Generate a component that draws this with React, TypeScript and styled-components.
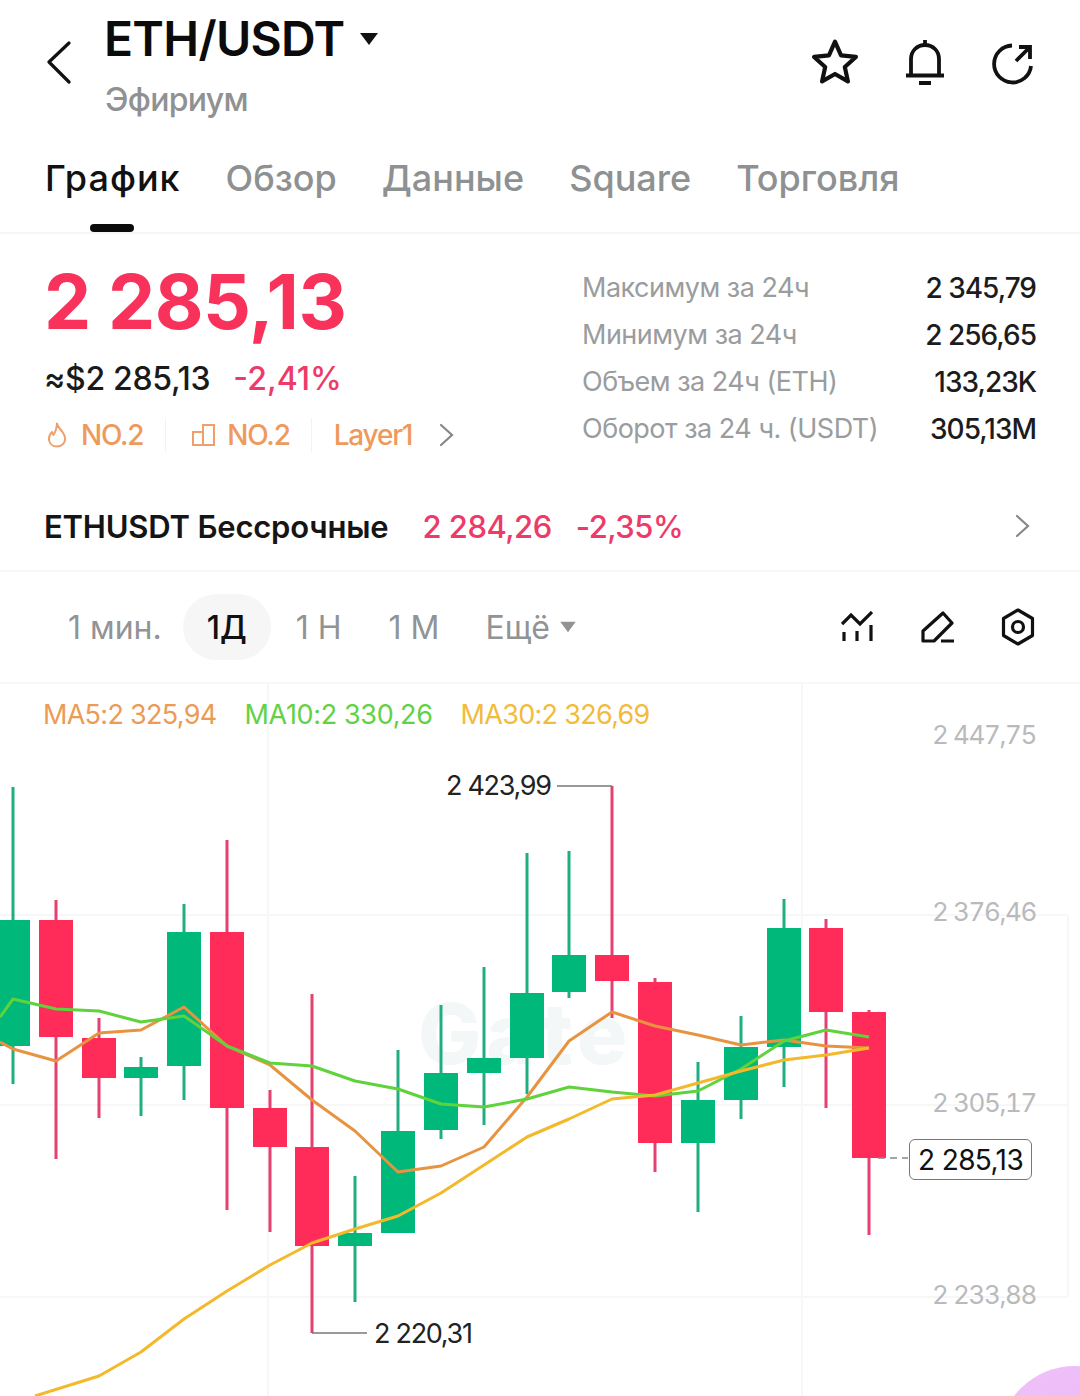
import React from "react";
import styled, { createGlobalStyle } from "styled-components";

const Global = createGlobalStyle`
  html, body { margin: 0; padding: 0; background: #fff; }
  body { font-family: Inter, "Noto Sans", sans-serif; }
`;

const Page = styled.div`
  width: 1080px;
  height: 1396px;
  position: relative;
  overflow: hidden;
  background: #fff;
  display: flex;
  flex-direction: column;
  font-family: Inter, "Noto Sans", sans-serif;
  color: #111;
`;

const Header = styled.header`
  height: 140px;
  display: flex;
  align-items: flex-start;
  padding: 14px 46px 0 46px;
  box-sizing: border-box;
`;
const BackIcon = styled.svg`
  width: 26px;
  height: 44px;
  margin: 26px 32px 0 0;
  flex: none;
`;
const TitleBlock = styled.div`
  display: flex;
  flex-direction: column;
  flex: 1;
`;
const TitleRow = styled.div`
  display: flex;
  align-items: center;
  gap: 14px;
  height: 50px;
`;
const Title = styled.h1`
  margin: 0;
  font-size: 48px;
  line-height: 50px;
  font-weight: 600;
  letter-spacing: -0.7px;
  color: #0b0b0b;
`;
const Caret = styled.svg<{ $small?: boolean }>`
  width: ${(p) => (p.$small ? 18 : 20)}px;
  height: ${(p) => (p.$small ? 12 : 14)}px;
  flex: none;
`;
const Subtitle = styled.div`
  margin-top: 16px;
  padding-left: 1px;
  font-size: 32px;
  line-height: 40px;
  font-weight: 500;
  letter-spacing: -0.7px;
  color: #8f9192;
`;
const HeaderActions = styled.div`
  display: flex;
  align-items: center;
  gap: 47px;
  margin-top: 25px;
`;
const IconSvg = styled.svg`
  display: block;
  flex: none;
`;
const StarIcon = styled(IconSvg)`
  margin-top: -3px;
`;
const BellIcon = styled(IconSvg)`
  margin-left: -1px;
`;
const ShareIcon = styled(IconSvg)`
  margin-top: 3px;
`;
const PencilIcon = styled(IconSvg)`
  margin-left: 2px;
`;

const Tabs = styled.nav`
  height: 94px;
  display: flex;
  gap: 45px;
  padding: 0 0 0 45px;
  border-bottom: 2px solid #f6f6f6;
  box-sizing: border-box;
`;
const Tab = styled.div<{ $active?: boolean }>`
  position: relative;
  height: 92px;
  padding-top: 16px;
  box-sizing: border-box;
  font-size: 36px;
  line-height: 44px;
  font-weight: 500;
  letter-spacing: ${(p) => (p.$active ? "1px" : "0")};
  color: ${(p) => (p.$active ? "#111" : "#8e9192")};
  &::after {
    content: "";
    display: ${(p) => (p.$active ? "block" : "none")};
    position: absolute;
    left: 45px;
    bottom: 0;
    width: 44px;
    height: 8px;
    border-radius: 4px;
    background: #0b0b0b;
  }
`;

const Stats = styled.section`
  height: 234px;
  display: flex;
  justify-content: space-between;
  padding: 0 44px 0 44px;
  box-sizing: border-box;
`;
const StatsLeft = styled.div`
  display: flex;
  flex-direction: column;
`;
const BigPrice = styled.div`
  margin-top: 28px;
  font-size: 75px;
  line-height: 80px;
  font-weight: 700;
  letter-spacing: -0.5px;
  color: #f8325b;
`;
const SubPriceRow = styled.div`
  margin-top: 17px;
  display: flex;
  gap: 23px;
  font-size: 32px;
  line-height: 40px;
  letter-spacing: -0.3px;
`;
const Fiat = styled.span`
  color: #1a1a1a;
  font-weight: 500;
`;
const Change = styled.span`
  color: #ee3a68;
  font-weight: 500;
  letter-spacing: 0;
`;
const TagRow = styled.div`
  margin-top: 18px;
  display: flex;
  align-items: center;
  height: 36px;
`;
const Tag = styled.div<{ $left: number; $right: number; $gap?: number; $last?: boolean }>`
  display: flex;
  align-items: center;
  gap: ${(p) => p.$gap ?? 14}px;
  height: 34px;
  padding: 0 ${(p) => p.$right}px 0 ${(p) => p.$left}px;
  border-right: ${(p) => (p.$last ? "none" : "1px solid #f5f3f1")};
  font-size: 28px;
  font-weight: 500;
  letter-spacing: -1.2px;
  color: #ee9a5c;
`;
const TagChevron = styled.svg`
  width: 15px;
  height: 24px;
  margin-left: 27px;
`;
const StatsTable = styled.dl`
  margin: 30px 0 0;
  display: grid;
  grid-template-columns: 1fr auto;
  grid-auto-rows: 47px;
  width: 454px;
  align-items: center;
`;
const StatLabel = styled.dt`
  font-size: 27px;
  color: #9a9c9e;
  letter-spacing: -0.5px;
  white-space: nowrap;
`;
const StatValue = styled.dd`
  margin: 0;
  text-align: right;
  font-size: 28px;
  font-weight: 500;
  color: #1c1c1c;
  letter-spacing: -1px;
`;

const PerpRow = styled.div`
  height: 104px;
  display: flex;
  align-items: center;
  padding: 14px 50px 0 44px;
  box-sizing: border-box;
  border-bottom: 2px solid #f7f7f7;
  font-size: 31px;
`;
const PerpName = styled.span`
  font-weight: 600;
  color: #151515;
  letter-spacing: -0.2px;
  margin-right: 34px;
`;
const PerpPrice = styled.span`
  font-weight: 500;
  color: #ee3a68;
  letter-spacing: -0.5px;
  margin-right: 24px;
`;
const Grow = styled.div`
  flex: 1;
`;

const Timeframes = styled.div`
  height: 112px;
  display: flex;
  align-items: center;
  padding: 0 45px 0 68px;
  box-sizing: border-box;
  border-bottom: 2px solid #f7f7f7;
  font-size: 32px;
  color: #919395;
`;
const Frame = styled.div<{ $active?: boolean; $gap: number }>`
  height: 66px;
  display: flex;
  align-items: center;
  justify-content: center;
  box-sizing: border-box;
  border-radius: 33px;
  width: ${(p) => (p.$active ? "88px" : "auto")};
  background: ${(p) => (p.$active ? "#f6f6f6" : "transparent")};
  color: ${(p) => (p.$active ? "#111" : "#919395")};
  font-weight: ${(p) => (p.$active ? 500 : 400)};
  margin-right: ${(p) => p.$gap}px;
`;
const MoreFrame = styled.div`
  display: flex;
  align-items: center;
  gap: 9px;
  margin-left: 2px;
`;
const ToolGroup = styled.div`
  margin-left: auto;
  display: flex;
  align-items: center;
  gap: 46px;
`;

const Chart = styled.div`
  position: relative;
  flex: 1;
`;
const Legend = styled.div`
  position: relative;
  z-index: 2;
  display: flex;
  gap: 28px;
  padding: 13px 0 0 43px;
  font-size: 27px;
  line-height: 36px;
`;
const LegendItem = styled.span<{ $color: string; $spacing: number }>`
  color: ${(p) => p.$color};
  letter-spacing: ${(p) => p.$spacing}px;
`;
const ChartSvg = styled.svg`
  position: absolute;
  inset: 0;
  width: 1080px;
  height: 712px;
`;
const AxisLabel = styled.span<{ $y: number }>`
  position: absolute;
  right: 44px;
  top: ${(p) => p.$y - 684 - 18}px;
  font-size: 26px;
  line-height: 36px;
  letter-spacing: -1.4px;
  font-variant-numeric: tabular-nums;
  color: #b9babc;
`;
const Extreme = styled.span<{ $x: number; $y: number }>`
  position: absolute;
  left: ${(p) => p.$x}px;
  top: ${(p) => p.$y - 684 - 18}px;
  font-size: 27px;
  line-height: 36px;
  letter-spacing: -1.3px;
  color: #222;
`;
const PriceTag = styled.div`
  position: absolute;
  left: 909px;
  top: 455px;
  width: 123px;
  height: 41px;
  box-sizing: border-box;
  border: 1px solid #777;
  border-radius: 6px;
  background: #fff;
  display: flex;
  align-items: center;
  justify-content: center;
  font-size: 28px;
  letter-spacing: -0.6px;
  color: #111;
`;
const Blob = styled.div`
  position: absolute;
  left: 998px;
  top: 682px;
  width: 154px;
  height: 154px;
  border-radius: 50%;
  background: linear-gradient(135deg, #efc1f7, #e9b6fb);
`;

const GREEN = "#00b87a";
const RED = "#ff2b59";
const GW = "#20ad82";
const RW = "#e5406f";

type C = [number, "g" | "r", number, number, number, number];
const candles: C[] = [
  [13, "g", 787, 920, 1046, 1084],
  [56, "r", 900, 920, 1037, 1159],
  [99, "r", 1018, 1038, 1078, 1118],
  [141, "g", 1057, 1067, 1078, 1116],
  [184, "g", 904, 932, 1066, 1100],
  [227, "r", 840, 932, 1108, 1210],
  [270, "r", 1090, 1108, 1147, 1232],
  [312, "r", 994, 1147, 1246, 1333],
  [355, "g", 1176, 1233, 1246, 1302],
  [398, "g", 1050, 1131, 1233, 1233],
  [441, "g", 1005, 1073, 1130, 1139],
  [484, "g", 967, 1058, 1073, 1125],
  [527, "g", 853, 993, 1058, 1094],
  [569, "g", 851, 955, 992, 998],
  [612, "r", 786, 955, 981, 1018],
  [655, "r", 978, 982, 1143, 1172],
  [698, "g", 1062, 1100, 1143, 1212],
  [741, "g", 1016, 1047, 1100, 1119],
  [784, "g", 899, 928, 1047, 1087],
  [826, "r", 919, 928, 1012, 1108],
  [869, "r", 1010, 1012, 1158, 1235],
];

const ma5 =
  "0,1042 13,1049 56,1061 99,1033 141,1030 184,1007 227,1046 270,1065 312,1100 355,1131 398,1172 441,1166 484,1147 527,1097 569,1041 612,1012 655,1026 698,1035 741,1045 784,1040 826,1046 869,1048";
const ma10 =
  "0,1017 13,999 56,1009 99,1011 141,1022 184,1016 227,1046 270,1063 312,1066 355,1081 398,1089 441,1104 484,1107 527,1099 569,1087 612,1092 655,1096 698,1091 741,1069 784,1041 826,1030 869,1037";
const ma30 =
  "35,1396 99,1376 141,1352 184,1319 227,1291 270,1265 312,1243 355,1229 398,1216 441,1193 484,1165 527,1137 569,1119 612,1099 655,1095 698,1083 741,1071 784,1060 826,1055 869,1048";

export default function App() {
  return (
    <Page>
      <Global />
      <Header>
        <BackIcon viewBox="0 0 26 44">
          <path d="M23 3 3 22l20 20" fill="none" stroke="#111" strokeWidth="3.2" strokeLinecap="round" strokeLinejoin="round" />
        </BackIcon>
        <TitleBlock>
          <TitleRow>
            <Title>ETH/USDT</Title>
            <Caret viewBox="0 0 20 14">
              <path d="M1 1h18l-9 12z" fill="#111" />
            </Caret>
          </TitleRow>
          <Subtitle>Эфириум</Subtitle>
        </TitleBlock>
        <HeaderActions>
          <StarIcon width="48" height="46" viewBox="0 0 46 44">
            <path d="M23 3.500 28.800 16.600 43 18.100 32.400 27.700 35.400 41.500 23 34.400 10.600 41.500 13.600 27.700 3 18.100 17.200 16.600Z" fill="none" stroke="#111" strokeWidth="4" strokeLinejoin="round" />
          </StarIcon>
          <BellIcon width="40" height="46" viewBox="0 0 40 46">
            <path d="M6 36V20C6 12 12 6 20 6s14 6 14 14v16M1 36.500h38M14 44h12M20 1v5" fill="none" stroke="#111" strokeWidth="3.800" />
          </BellIcon>
          <ShareIcon width="42" height="42" viewBox="0 0 42 42">
            <path d="M20 2.500A18.500 18.500 0 1 0 39 23M24 18 38 4M27 4h11v12" fill="none" stroke="#111" strokeWidth="3.800" />
          </ShareIcon>
        </HeaderActions>
      </Header>

      <Tabs>
        <Tab $active>График</Tab>
        <Tab>Обзор</Tab>
        <Tab>Данные</Tab>
        <Tab>Square</Tab>
        <Tab>Торговля</Tab>
      </Tabs>

      <Stats>
        <StatsLeft>
          <BigPrice>2 285,13</BigPrice>
          <SubPriceRow>
            <Fiat>≈$2 285,13</Fiat>
            <Change>-2,41%</Change>
          </SubPriceRow>
          <TagRow>
            <Tag $left={3} $right={22}>
              <IconSvg width="20" height="26" viewBox="0 0 20 26">
                <path d="M10 1.500c1 4 3 5 5.500 8.500 2 3 3 5 2.500 8-.6 4-4 6.500-8 6.500s-7.500-2.500-8-6.500c-.4-3.500 1-6 3-8l1.500 3C8 11 9.500 6 10 1.500Z" fill="none" stroke="#eea06a" strokeWidth="2" strokeLinejoin="round" />
              </IconSvg>
              NO.2
            </Tag>
            <Tag $left={26} $right={21} $gap={12}>
              <IconSvg width="23" height="22" viewBox="0 0 23 22">
                <path d="M1 8h10v13H1zM11 1h11v20H11z" fill="none" stroke="#eea06a" strokeWidth="2" />
              </IconSvg>
              NO.2
            </Tag>
            <Tag $left={22} $right={0} $last>Layer1</Tag>
            <TagChevron viewBox="0 0 15 24">
              <path d="M2 2l11 10L2 22" fill="none" stroke="#85878a" strokeWidth="2.200" strokeLinecap="round" />
            </TagChevron>
          </TagRow>
        </StatsLeft>
        <StatsTable>
          <StatLabel>Максимум за 24ч</StatLabel>
          <StatValue>2 345,79</StatValue>
          <StatLabel>Минимум за 24ч</StatLabel>
          <StatValue>2 256,65</StatValue>
          <StatLabel>Объем за 24ч (ETH)</StatLabel>
          <StatValue>133,23K</StatValue>
          <StatLabel>Оборот за 24 ч. (USDT)</StatLabel>
          <StatValue>305,13M</StatValue>
        </StatsTable>
      </Stats>

      <PerpRow>
        <PerpName>ETHUSDT Бессрочные</PerpName>
        <PerpPrice>2 284,26</PerpPrice>
        <PerpPrice>-2,35%</PerpPrice>
        <Grow />
        <IconSvg width="15" height="24" viewBox="0 0 15 24">
          <path d="M2 2l11 10L2 22" fill="none" stroke="#85878a" strokeWidth="2.200" strokeLinecap="round" />
        </IconSvg>
      </PerpRow>

      <Timeframes>
        <Frame $gap={21}>1 мин.</Frame>
        <Frame $active $gap={25}>1Д</Frame>
        <Frame $gap={47}>1 Н</Frame>
        <Frame $gap={44}>1 М</Frame>
        <MoreFrame>
          Ещё
          <Caret $small viewBox="0 0 20 14">
            <path d="M1 1h18l-9 12z" fill="#919395" />
          </Caret>
        </MoreFrame>
        <ToolGroup>
          <IconSvg width="32" height="32" viewBox="0 0 32 32">
            <path d="M1 13 10 4l9 9L31 1M3 21v9M16 20v10M30 14v16" fill="none" stroke="#111" strokeWidth="3.200" />
          </IconSvg>
          <PencilIcon width="34" height="32" viewBox="0 0 34 32">
            <path d="M2 30V20L22 2l9 10L13 30ZM20 30h13" fill="none" stroke="#111" strokeWidth="3.200" strokeLinejoin="round" />
          </PencilIcon>
          <IconSvg width="34" height="38" viewBox="0 0 34 38">
            <path d="M17 2 31.500 10.500v17L17 36 2.500 27.500v-17Z" fill="none" stroke="#111" strokeWidth="3.200" strokeLinejoin="round" />
            <circle cx="17" cy="19" r="5.500" fill="none" stroke="#111" strokeWidth="3.200" />
          </IconSvg>
        </ToolGroup>
      </Timeframes>

      <Chart>
        <ChartSvg viewBox="0 684 1080 712">
          <path d="M0 915H1068M0 1105H1068M0 1297H1068M268 684V1396M802 684V1396M1068 915V1297" fill="none" stroke="#f7f7f7" strokeWidth="2" />
          <text x="418" y="1064" fontFamily="Inter, sans-serif" fontSize="84" fontWeight="800" fill="#f4f7f7" letterSpacing="5">Gate</text>
          {candles.map(([x, c, top, a, b, bottom]) => (
            <g key={x}>
              <line x1={x} x2={x} y1={top} y2={bottom} stroke={c === "g" ? GW : RW} strokeWidth="3" />
              <rect x={x - 17} y={a} width="34" height={b - a} fill={c === "g" ? GREEN : RED} />
            </g>
          ))}
          <polyline points={ma5} fill="none" stroke="#e8933f" strokeWidth="3" strokeLinejoin="round" />
          <polyline points={ma10} fill="none" stroke="#5fd23c" strokeWidth="3" strokeLinejoin="round" />
          <polyline points={ma30} fill="none" stroke="#f3b92b" strokeWidth="3" strokeLinejoin="round" />
          <path d="M557 786H612" fill="none" stroke="#777" strokeWidth="1.500" />
          <path d="M312 1333H367" fill="none" stroke="#777" strokeWidth="1.500" />
          <path d="M878 1158H908" fill="none" stroke="#888" strokeWidth="1.500" strokeDasharray="7 5" />
        </ChartSvg>
        <Legend>
          <LegendItem $color="#ec9b55" $spacing={-0.7}>MA5:2 325,94</LegendItem>
          <LegendItem $color="#62d145" $spacing={-0.35}>MA10:2 330,26</LegendItem>
          <LegendItem $color="#f2bb3c" $spacing={-0.7}>MA30:2 326,69</LegendItem>
        </Legend>
        <AxisLabel $y={735}>2 447,75</AxisLabel>
        <AxisLabel $y={912}>2 376,46</AxisLabel>
        <AxisLabel $y={1103}>2 305,17</AxisLabel>
        <AxisLabel $y={1295}>2 233,88</AxisLabel>
        <Extreme $x={446} $y={786}>2 423,99</Extreme>
        <Extreme $x={374} $y={1334}>2 220,31</Extreme>
        <PriceTag>2 285,13</PriceTag>
        <Blob />
      </Chart>
    </Page>
  );
}
